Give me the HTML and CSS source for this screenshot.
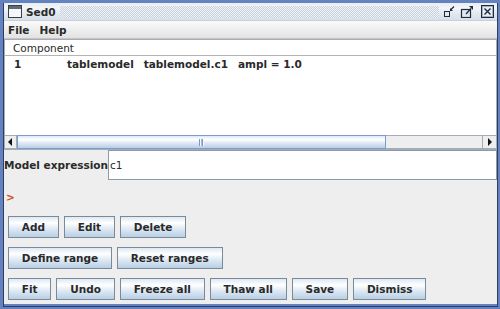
FILE: index.html
```
<!DOCTYPE html>
<html>
<head>
<meta charset="utf-8">
<title>Sed0</title>
<link rel="stylesheet" href="styles.css">
</head>
<body>
<div class="frame">
  <div class="win">
    <div class="titlebar">
      <svg class="appicon" width="14" height="13" viewBox="0 0 14 13">
        <rect x="0.5" y="0.5" width="13" height="12" fill="#f4f6f9" stroke="#3a3f46"/>
        <rect x="1" y="1" width="12" height="3" fill="#5d6a7a"/>
      </svg>
      <span class="title">Sed0</span>
      <div class="bumps"></div>
      <svg class="ticon" width="12" height="13" viewBox="0 0 12 13">
        <rect x="1.5" y="6.5" width="5" height="5" fill="#dfe8f2" stroke="#1e2a38"/>
        <path d="M11 1.5 L8 4.5" stroke="#1e2a38" stroke-width="1.3"/>
        <polygon points="7,6 7,3 10,6" fill="#1e2a38"/>
      </svg>
      <svg class="ticon gap1" width="14" height="13" viewBox="0 0 14 13">
        <rect x="1.5" y="4.5" width="9" height="8" fill="#dfe8f2" stroke="#1e2a38" stroke-width="1.2"/>
        <path d="M6 9 L11 3.5" stroke="#1e2a38" stroke-width="1.3"/>
        <polygon points="13,1 9,1 13,5" fill="#1e2a38"/>
      </svg>
      <svg class="ticon gap2" width="13" height="13" viewBox="0 0 13 13">
        <rect x="0.5" y="0.5" width="12" height="12" fill="#e6edf5" stroke="#1e2a38"/>
        <rect x="1.5" y="1.5" width="10" height="10" fill="none" stroke="#9fb3cc"/>
        <path d="M3.5 3.5 L9.5 9.5 M9.5 3.5 L3.5 9.5" stroke="#1e2a38" stroke-width="1.4"/>
      </svg>
    </div>
    <div class="menubar">
      <span class="menu">File</span>
      <span class="menu">Help</span>
    </div>
    <div class="body">
      <div class="scrollpane">
        <div class="viewport">
          <div class="thead">Component</div>
          <div class="trow">
            <span class="c-idx">1</span>
            <span class="c-cell">tablemodel</span>
            <span class="c-cell">tablemodel.c1</span>
            <span class="c-cell">ampl = 1.0</span>
          </div>
        </div>
        <div class="hscroll">
          <div class="sbtn left">
            <svg width="5" height="8" viewBox="0 0 5 8"><polygon points="4,0 4,8 0,4" fill="#111"/></svg>
          </div>
          <div class="thumb"><span class="grip"></span></div>
          <div class="track"></div>
          <div class="sbtn right">
            <svg width="5" height="8" viewBox="0 0 5 8"><polygon points="1,0 1,8 5,4" fill="#111"/></svg>
          </div>
        </div>
      </div>
      <div class="expr">
        <span class="lbl">Model expression</span>
        <div class="field">c1</div>
      </div>
      <div class="prompt">&gt;</div>
      <div class="btnrow">
        <button class="btn">Add</button>
        <button class="btn">Edit</button>
        <button class="btn">Delete</button>
      </div>
      <div class="btnrow">
        <button class="btn">Define range</button>
        <button class="btn">Reset ranges</button>
      </div>
      <div class="btnrow">
        <button class="btn">Fit</button>
        <button class="btn">Undo</button>
        <button class="btn">Freeze all</button>
        <button class="btn">Thaw all</button>
        <button class="btn">Save</button>
        <button class="btn">Dismiss</button>
      </div>
    </div>
  </div>
</div>
</body>
</html>
```
FILE: styles.css
```
html, body {
  margin: 0;
  padding: 0;
}
body {
  width: 500px;
  height: 309px;
  overflow: hidden;
  font-family: "DejaVu Sans", "Noto Sans", sans-serif;
  font-size: 10.5px;
  color: #2a2a2a;
}
.frame {
  box-sizing: border-box;
  width: 500px;
  height: 309px;
  background: #6382bf;
  padding: 3px 2px 2px 3px;
  display: flex;
}
.win {
  flex: 1;
  min-width: 0;
  display: flex;
  flex-direction: column;
  border: 1px solid #2c3f63;
  border-top: none;
  padding-bottom: 2px;
  background: #6382bf;
}
.titlebar {
  box-sizing: border-box;
  height: 18px;
  display: flex;
  align-items: center;
  background: linear-gradient(#e8edf3, #f3f6f9 30%, #e4e9f0 60%, #d7dfe9);
  border-bottom: 1px solid #c9d0da;
}
.appicon {
  margin-left: 4px;
  flex: none;
}
.title {
  margin-left: 4px;
  font-weight: bold;
  white-space: nowrap;
}
.bumps {
  flex: 1;
  height: 12px;
  margin: 0 4px;
  background-color: #eef2f7;
  background-image: conic-gradient(#c8d2df 25%, transparent 0 50%, #c8d2df 0 75%, transparent 0);
  background-size: 2px 2px;
}
.ticon {
  flex: none;
}
.gap1 {
  margin-left: 5px;
}
.gap2 {
  margin-left: 7px;
  margin-right: 3px;
}
.menubar {
  box-sizing: border-box;
  height: 18px;
  display: flex;
  align-items: center;
  gap: 10px;
  padding-left: 4px;
  background: linear-gradient(#fafafa, #e2e2e2);
  border-bottom: 1px solid #c4c4c4;
}
.menu {
  font-weight: bold;
}
.body {
  flex: 1;
  display: flex;
  flex-direction: column;
  background: #eeeeee;
}
.scrollpane {
  box-sizing: border-box;
  height: 111px;
  border: 1px solid #a3adb8;
  background: #fff;
  display: flex;
  flex-direction: column;
}
.viewport {
  flex: 1;
  background: #fff;
}
.thead {
  height: 15px;
  line-height: 16px;
  padding-left: 8px;
  border-bottom: 1px solid #b4b4b4;
  background: #fff;
}
.trow {
  height: 16px;
  line-height: 16px;
  padding-left: 9px;
  display: flex;
  font-weight: bold;
  white-space: nowrap;
}
.c-idx {
  width: 53px;
  flex: none;
}
.c-cell {
  margin-right: 10px;
}
.hscroll {
  height: 14px;
  display: flex;
  background: #eeeeee;
}
.sbtn {
  box-sizing: border-box;
  display: flex;
  align-items: center;
  justify-content: center;
  background: #eeeeee;
  border-top: 1px solid #a3adb8;
  border-bottom: 1px solid #a3adb8;
}
.sbtn.left {
  width: 12px;
  border-right: 1px solid #a3adb8;
}
.sbtn.right {
  width: 14px;
  border-left: 1px solid #a3adb8;
}
.thumb {
  box-sizing: border-box;
  width: 369px;
  flex: none;
  border: 1px solid #7d9bd0;
  background: linear-gradient(#dde8f3, #ffffff 30%, #dde8f3 60%, #b8cfe5);
  display: flex;
  align-items: center;
  justify-content: center;
}
.grip {
  width: 5px;
  height: 7px;
  background: repeating-linear-gradient(90deg, #7f97c4 0 1px, #f4f8fc 1px 2px, #a8badb 2px 3px);
}
.track {
  box-sizing: border-box;
  flex: 1;
  border-top: 1px solid #a3adb8;
  border-bottom: 1px solid #a3adb8;
  background: #eeeeee;
}
.expr {
  height: 30px;
  display: flex;
  align-items: center;
}
.lbl {
  width: 104px;
  flex: none;
  font-weight: bold;
  white-space: nowrap;
}
.field {
  box-sizing: border-box;
  flex: 1;
  height: 30px;
  display: flex;
  align-items: center;
  padding-left: 1px;
  background: #fff;
  border: 1px solid #8e9aa7;
}
.prompt {
  box-sizing: border-box;
  height: 36px;
  padding: 9px 0 0 2px;
  line-height: 16px;
  color: #d2501e;
  font-weight: bold;
}
.btnrow {
  display: flex;
  gap: 5px;
  padding-left: 4px;
}
.btnrow + .btnrow {
  margin-top: 9px;
}
.btn {
  box-sizing: border-box;
  height: 22px;
  margin: 0;
  padding: 0 12.85px;
  font-family: "DejaVu Sans", "Noto Sans", sans-serif;
  font-size: 10.5px;
  font-weight: bold;
  color: #2a2a2a;
  border: 1px solid #7a8a99;
  border-radius: 0;
  background: linear-gradient(#dde8f3, #ffffff 30%, #dde8f3 60%, #b8cfe5);
  white-space: nowrap;
}
```
